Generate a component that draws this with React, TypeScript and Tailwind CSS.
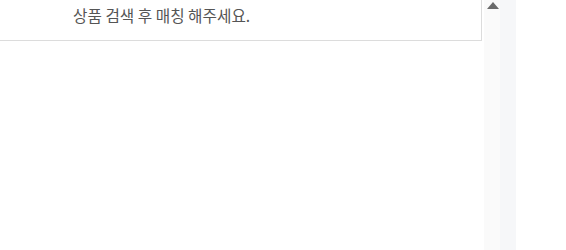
export default function App() {
  return (
    <div className="flex h-[250px] w-[566px] bg-white" style={{ fontFamily: '"Noto Sans CJK KR", "Noto Sans", sans-serif' }}>
      <div className="w-[484px] shrink-0">
        <div className="h-[41px] w-[482px] border-r border-b border-[#dcdcdc] pt-[8px] pl-[73px]">
          <span className="block text-[15.7px] leading-none text-[#555]">상품 검색 후 매칭 해주세요.</span>
        </div>
      </div>
      <div className="flex w-[32px] shrink-0">
        <div className="relative w-[16px] bg-[#fafafa]">
          <svg className="absolute left-[3px] top-[2px]" width="12" height="7" viewBox="0 0 12 7">
            <polygon points="6,0 12,7 0,7" fill="#6b6b6b" />
          </svg>
        </div>
        <div className="w-[16px] bg-[#f6f7f9]" />
      </div>
    </div>
  );
}
